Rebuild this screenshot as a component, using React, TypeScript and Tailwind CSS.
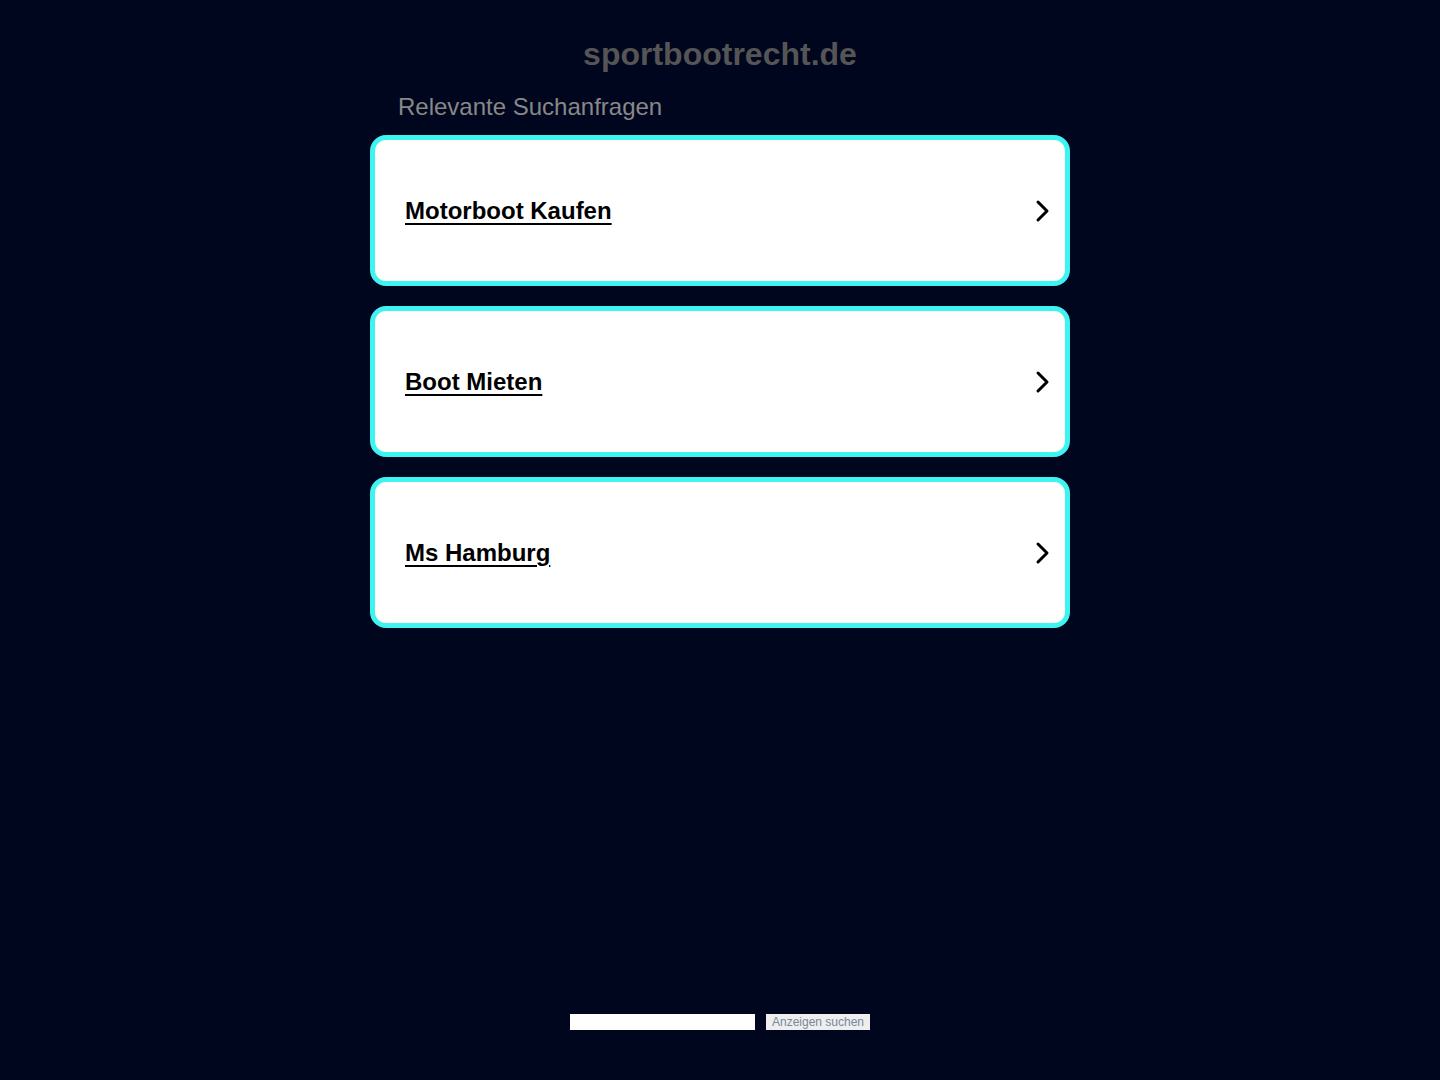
const links = ["Motorboot Kaufen", "Boot Mieten", "Ms Hamburg"];

const Chevron = () => (
  <svg width="16" height="24" viewBox="0 0 16 24" fill="none" className="flex-none">
    <path d="M3 3 L12 12 L3 21" stroke="#000" strokeWidth="3" strokeLinecap="round" strokeLinejoin="round" />
  </svg>
);

export default function App() {
  return (
    <div className="min-h-[1080px] bg-[#00061e] flex flex-col items-center font-['Liberation_Sans',Arial,sans-serif]">
      <h1 className="mt-[35px] text-[32px] leading-[38px] font-bold text-[#555555]">sportbootrecht.de</h1>
      <div className="w-[700px] mt-[20px]">
        <h2 className="pl-[28px] text-[24px] leading-[28px] text-[#888888]">Relevante Suchanfragen</h2>
        <div className="mt-[14px] flex flex-col gap-[20px]">
          {links.map((t) => (
            <a
              key={t}
              href="#"
              className="h-[151px] rounded-[16px] border-[5px] border-[#3ef4f0] bg-white pl-[30px] pr-[14px] flex items-center justify-between"
            >
              <span className="text-[24px] font-bold text-black underline decoration-2 underline-offset-[4px]">{t}</span>
              <Chevron />
            </a>
          ))}
        </div>
      </div>
      <div className="mt-auto mb-[50px] flex items-center gap-[11px]">
        <input className="w-[185px] h-[16px] bg-white border-0 outline-none" />
        <button className="h-[16px] px-[6px] bg-[#eeeeee] text-[12px] leading-[16px] text-[#778899]">Anzeigen suchen</button>
      </div>
    </div>
  );
}
